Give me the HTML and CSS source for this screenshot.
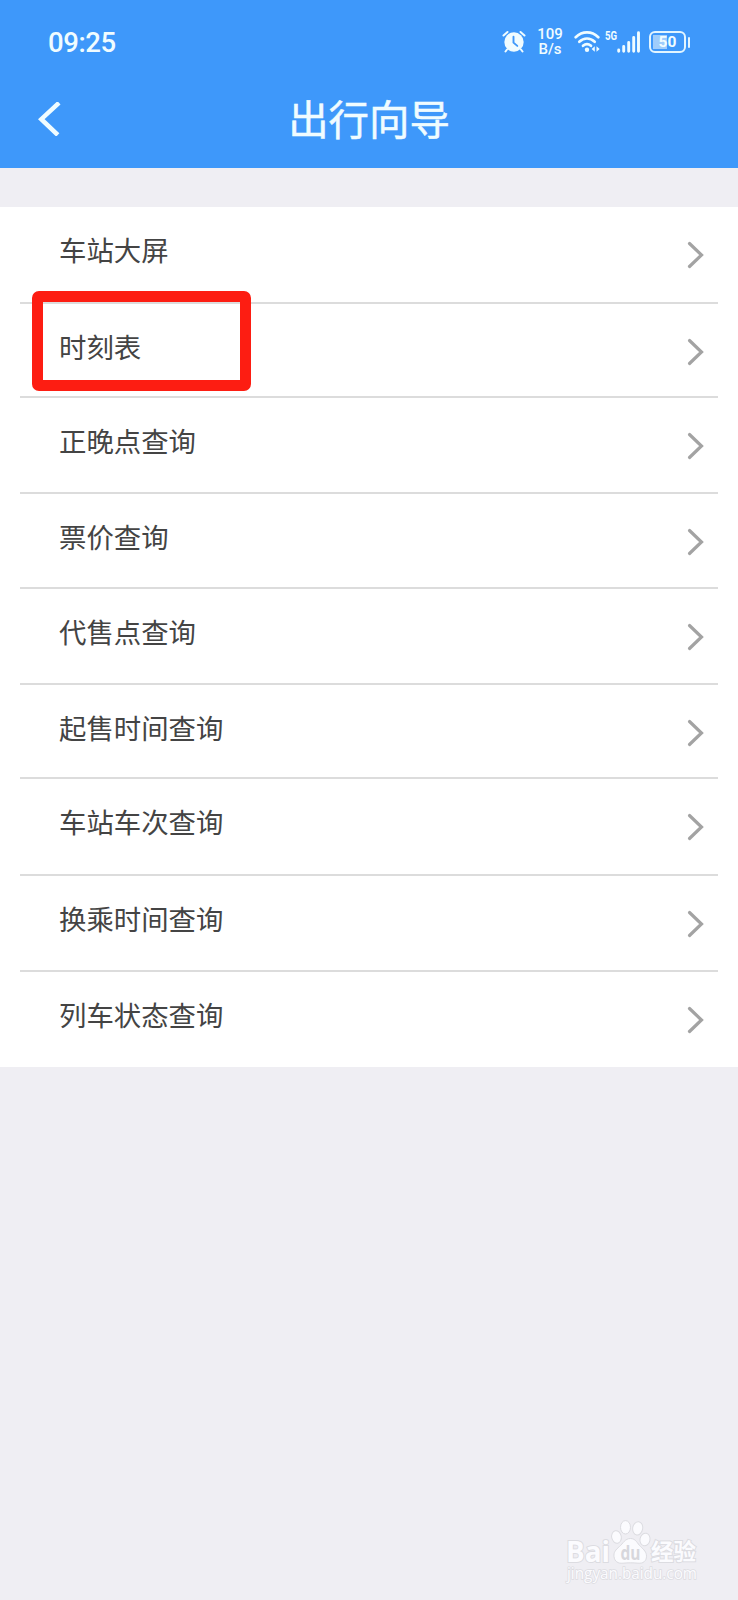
FILE: index.html
```html
<!DOCTYPE html>
<html lang="zh-CN">
<head>
<meta charset="utf-8">
<title>出行向导</title>
<link rel="stylesheet" href="styles.css">
</head>
<body>
<header class="header">
  <div class="status">
    <span class="clock">09:25</span>
    <div class="indicators">
      <svg class="alarm" width="24" height="24" viewBox="0 0 24 24">
        <path d="M1.500 5.500 5.500 2M22.500 5.500 18.500 2M5 19.500 3.500 21.500M19 19.500 20.500 21.500" fill="none" stroke="#f0fcff" stroke-width="2" stroke-linecap="round"/>
        <circle cx="12" cy="12" r="9.700" fill="#f0fcff"/>
        <path d="M11.500 6.800v5.800l3.800 3.300" fill="none" stroke="#3e98fa" stroke-width="1.900" stroke-linecap="round"/>
      </svg>
      <div class="speed"><span>109</span><span>B/s</span></div>
      <svg class="wifi" width="26" height="24" viewBox="0 0 26 24">
        <g fill="none" stroke="#f0fcff" stroke-width="2.700" stroke-linecap="round">
          <path d="M1.700 7.200C8.300 .8 17.700 .8 24.300 7.200"/>
          <path d="M5.300 11.700c4.500-4.300 10.900-4.300 15.400 0"/>
          <path d="M9 15.800c2.400-2.100 5.600-2.100 8 0"/>
        </g>
        <circle cx="13" cy="19.700" r="2.200" fill="#f0fcff"/>
        <path d="M20.800 16.300v5.400L17.600 19zM22.500 16.300v5.400l3.200-2.700z" fill="#f0fcff"/>
      </svg>
      <div class="mobile">
        <span class="gen">5G</span>
        <svg width="24" height="22" viewBox="0 0 24 22">
          <path d="M1.700 19v1.200M6.700 15.500v4.700M11.700 11.500v8.700M16.700 6.500v13.700M21.500 1.700v18.500" stroke="#f0fcff" stroke-width="2.900" stroke-linecap="round"/>
        </svg>
      </div>
      <div class="battery"><span>50</span></div>
      <i class="battery-tip"></i>
    </div>
  </div>
  <div class="nav">
    <svg class="back" width="24" height="34" viewBox="0 0 24 34"><path d="M22 .8 4.300 17.200 20.800 33" fill="none" stroke="#f0fcff" stroke-width="4.500"/></svg>
    <h1 class="title">出行向导</h1>
    <span class="nav-end"></span>
  </div>
</header>
<main class="list">
  <a class="row h97"><span>车站大屏</span><svg class="chev" viewBox="0 0 18 28"><path d="M2.500 2.500 14.500 14 2.500 25.500"/></svg></a>
  <a class="row h94"><span>时刻表</span><svg class="chev" viewBox="0 0 18 28"><path d="M2.500 2.500 14.500 14 2.500 25.500"/></svg><i class="highlight"></i></a>
  <a class="row h96"><span>正晚点查询</span><svg class="chev" viewBox="0 0 18 28"><path d="M2.500 2.500 14.500 14 2.500 25.500"/></svg></a>
  <a class="row h95"><span>票价查询</span><svg class="chev" viewBox="0 0 18 28"><path d="M2.500 2.500 14.500 14 2.500 25.500"/></svg></a>
  <a class="row h96"><span>代售点查询</span><svg class="chev" viewBox="0 0 18 28"><path d="M2.500 2.500 14.500 14 2.500 25.500"/></svg></a>
  <a class="row h94"><span>起售时间查询</span><svg class="chev" viewBox="0 0 18 28"><path d="M2.500 2.500 14.500 14 2.500 25.500"/></svg></a>
  <a class="row h97"><span>车站车次查询</span><svg class="chev" viewBox="0 0 18 28"><path d="M2.500 2.500 14.500 14 2.500 25.500"/></svg></a>
  <a class="row h96"><span>换乘时间查询</span><svg class="chev" viewBox="0 0 18 28"><path d="M2.500 2.500 14.500 14 2.500 25.500"/></svg></a>
  <a class="row h95"><span>列车状态查询</span><svg class="chev" viewBox="0 0 18 28"><path d="M2.500 2.500 14.500 14 2.500 25.500"/></svg></a>
</main>
<svg class="watermark" width="140" height="66" viewBox="0 0 140 66">
  <g fill="#fbfbfe" stroke="#dcdce1" stroke-width="1">
    <text class="wm-brand" x="0" y="41.500" textLength="44" lengthAdjust="spacingAndGlyphs">Bai</text>
    <ellipse cx="50.500" cy="17" rx="4.800" ry="6.300" transform="rotate(-12 50.500 17)"/>
    <ellipse cx="59.500" cy="7.300" rx="5" ry="6.700"/>
    <ellipse cx="71.700" cy="8.300" rx="5" ry="6.700" transform="rotate(10 71.700 8.300)"/>
    <ellipse cx="79" cy="19.500" rx="5" ry="6.300" transform="rotate(12 79 19.500)"/>
    <path d="M64.500 18.500c-5.500 0-7.500 5-11 8-4 3.400-6 6-5.500 10 .6 5 4 7.200 9 6.700 5-.5 10-.5 15 0 5 .5 8.500-2 8.500-7 0-4-2.500-6.500-6-9.700-3.300-3-4.500-8-10-8z"/>
    <text class="wm-cn" x="85" y="40" textLength="45" lengthAdjust="spacingAndGlyphs">经验</text>
    <text class="wm-url" x="1" y="58.500" textLength="130" lengthAdjust="spacingAndGlyphs">jingyan.baidu.com</text>
  </g>
  <text class="wm-du" x="54.500" y="40" textLength="20" lengthAdjust="spacingAndGlyphs">du</text>
</svg>
</body>
</html>
```
FILE: styles.css
```css
* { box-sizing: border-box; }
body {
  margin: 0;
  width: 738px;
  height: 1600px;
  display: flex;
  flex-direction: column;
  background: #efeef3;
  font-family: Roboto, "Noto Sans CJK SC", sans-serif;
  overflow: hidden;
}
.header {
  height: 168px;
  flex: none;
  background: #3e98fa;
  color: #f0fcff;
}
.status {
  height: 84px;
  padding: 0 48px 0 48px;
  display: flex;
  align-items: center;
  justify-content: space-between;
}
.clock {
  padding-top: 2px;
  font: 500 27.500px/30px Roboto, sans-serif;
  letter-spacing: -.4px;
}
.indicators { display: flex; align-items: center; }
.speed {
  width: 28px;
  margin-left: 10px;
  display: flex;
  flex-direction: column;
  align-items: center;
  font: 500 15px/15px Roboto, sans-serif;
}
.wifi { margin-left: 10px; }
.mobile { display: flex; margin-left: 5px; }
.gen { width: 12px; font: 700 12px/10px Roboto, sans-serif; transform: scaleX(.8); transform-origin: left; }
.battery {
  width: 37px;
  height: 22px;
  margin-left: 8px;
  border: 2px solid #e2f5ff;
  border-radius: 6px;
  padding: 2px;
  background: linear-gradient(90deg, #9fcdfb 0 14px, transparent 14px) 2px 2px / 29px 14px no-repeat;
  font: 700 15.500px/15px Roboto, sans-serif;
  text-align: center;
}
.battery-tip { width: 2px; height: 11px; margin-left: 2px; border-radius: 1px; background: #e2f5ff; }
.nav {
  height: 70px;
  padding: 0 37px;
  display: flex;
  align-items: center;
  justify-content: space-between;
}
.nav-end { width: 24px; }
.title {
  margin: 0;
  padding-bottom: 3px;
  font: 400 40.400px/60px "Noto Sans CJK SC", sans-serif;
  -webkit-text-stroke: .5px #f0fcff;
}
.list { margin-top: 39px; background: #fff; flex: none; }
.row {
  position: relative;
  margin: 0 20px;
  padding: 22px 13px 0 39px;
  display: flex;
  justify-content: space-between;
  align-items: flex-start;
  border-bottom: 2px solid #dcdcdc;
  color: #444;
  font: 400 27.400px/40px "Noto Sans CJK SC", sans-serif;
}
.row:last-child { border-bottom: 0; }
.h94 { height: 94px; }
.h95 { height: 95px; }
.h96 { height: 96px; }
.h97 { height: 97px; }
.chev {
  width: 18px;
  height: 28px;
  margin: 12px .5px 0 0;
  fill: none;
  stroke: #a3a3a3;
  stroke-width: 3.200;
  stroke-linecap: round;
}
.highlight {
  position: absolute;
  left: 12px;
  top: -13px;
  width: 219px;
  height: 100px;
  border: 11px solid #fd1d12;
  border-radius: 7px;
}
.watermark { margin: auto 32px 14px auto; flex: none; overflow: visible; }
.watermark text { paint-order: stroke; }
.wm-brand { font: 700 29px "Open Sans", sans-serif; stroke-width: 2px; }
.wm-cn { font: 700 23px "Noto Sans CJK SC", sans-serif; stroke-width: 2px; }
.wm-url { font: 400 15.500px "Open Sans", sans-serif; stroke-width: 1.500px; }
.watermark .wm-du { font: 700 19px "Open Sans", sans-serif; fill: #d7d7dc; }
```
